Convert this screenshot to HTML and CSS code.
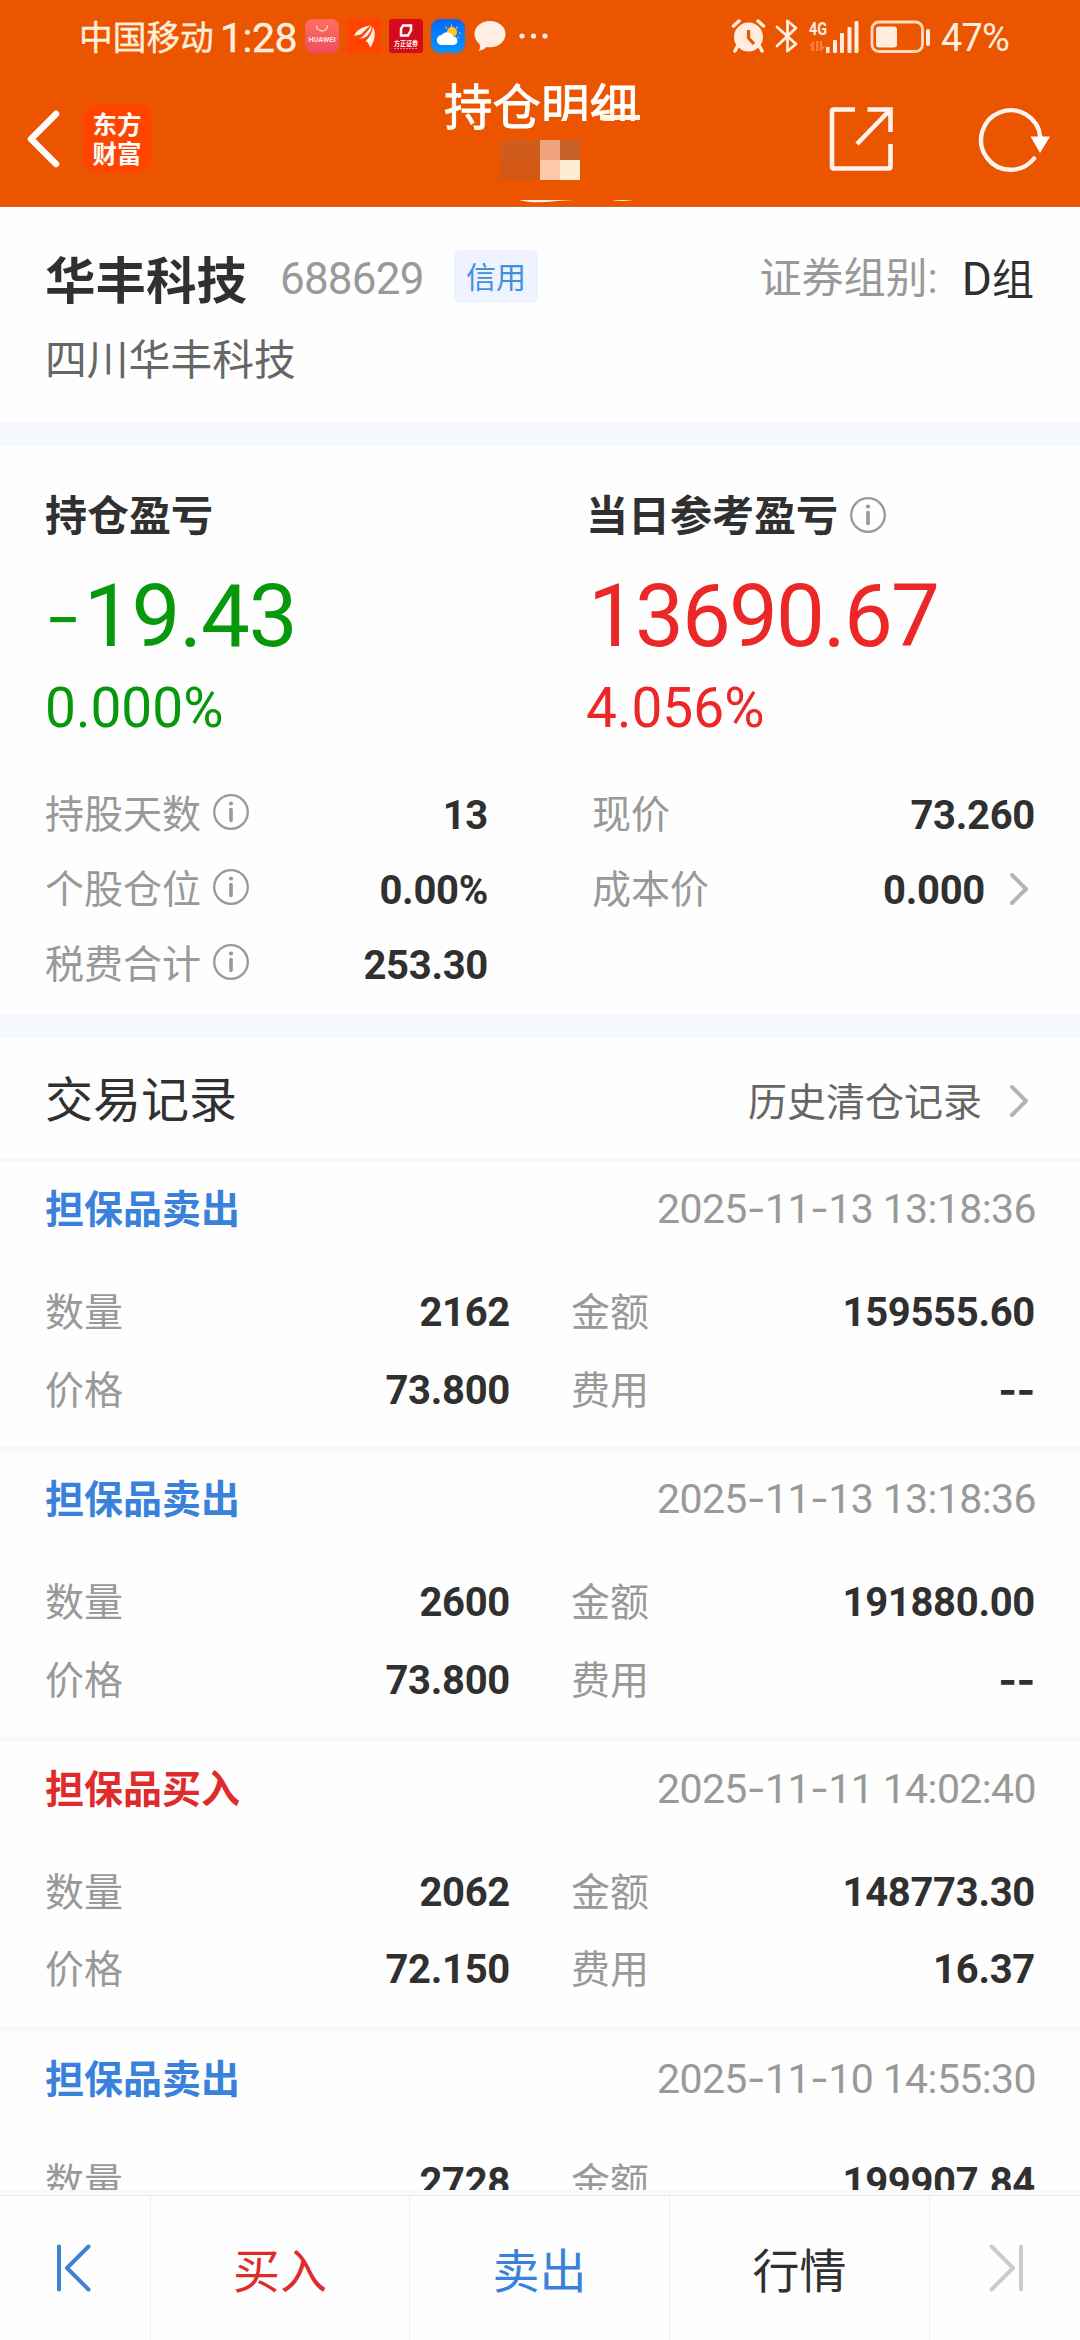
FILE: index.html
```html
<!DOCTYPE html>
<html lang="zh-CN">
<head>
<meta charset="utf-8">
<title>持仓明细</title>
<link rel="stylesheet" href="styles.css">
</head>
<body>
<svg class="defs" width="0" height="0">
  <symbol id="info" viewBox="0 0 36 36"><circle cx="18" cy="18" r="16.8" fill="none" stroke="#999" stroke-width="2.3"/><circle cx="18" cy="9.5" r="2.1" fill="#999"/><path d="M18 15.5V26.5" stroke="#999" stroke-width="3.6" stroke-linecap="round"/></symbol>
  <symbol id="chev" viewBox="0 0 20 34"><path d="M3 3L17 17L3 31" fill="none" stroke="#b5b3b6" stroke-width="4" stroke-linecap="round" stroke-linejoin="round"/></symbol>
</svg>
<div class="screen">
  <header class="top">
    <div class="status">
      <span class="carrier">中国移动</span><span class="clock">1:28</span>
      <div class="apps">
        <svg width="34" height="34" viewBox="0 0 34 34"><defs><linearGradient id="hw" x2="0" y2="1"><stop stop-color="#ff6f61"/><stop offset="1" stop-color="#ee4d62"/></linearGradient></defs><rect width="34" height="34" rx="8" fill="url(#hw)"/><path d="M11.5 6.500a5.500 5.500 0 0 0 11 0" fill="none" stroke="#ffd5cf" stroke-width="1.300"/><text x="3.500" y="22.500" class="hw-text" textLength="27" lengthAdjust="spacingAndGlyphs">HUAWEI</text></svg>
        <svg width="34" height="34" viewBox="0 0 34 34"><rect width="34" height="34" fill="#ff4300"/><g fill="#fff0e8"><path d="M7 17.500C8 12 16 7 23.500 6.500C20 9 17.500 12 15 14.500C12 17 9 15.500 7 17.500Z"/><path d="M12 20.500C17 16.500 21.500 12 24.300 6.500C25.300 9 23.500 13 20.500 16.500C18 19.500 15 18.500 12 20.500Z"/><path d="M18.500 22.500C23 18 25.500 13 25.800 8C29.500 13 27.500 22 23.500 28.500C21.500 26 21.500 22.500 18.500 22.500Z"/></g></svg>
        <svg width="34" height="34" viewBox="0 0 34 34"><rect width="34" height="34" rx="3" fill="#d50b1c"/><path d="M14 6.500H22V11.500L19 16.500H12V10Z" fill="none" stroke="#fff" stroke-width="2.500"/><text x="5" y="27" class="fz-text" textLength="24" lengthAdjust="spacingAndGlyphs">方正证券</text><path d="M5 29.500H29" stroke="#ee8d94" stroke-width="1" stroke-dasharray="2 1"/></svg>
        <svg width="34" height="34" viewBox="0 0 34 34"><defs><linearGradient id="wx" x2="0" y2="1"><stop stop-color="#0668f7"/><stop offset="1" stop-color="#0796ff"/></linearGradient></defs><rect width="34" height="34" rx="9" fill="url(#wx)"/><path d="M20.500 5.500v3M14.500 7.500l1.500 2M26.500 7.500l-1.500 2M28 14h2M26.500 18l1.500 1" stroke="#ffc62a" stroke-width="1.200"/><circle cx="21" cy="13" r="5" fill="#ffc62a"/><path d="M11 26a5 5 0 0 1-.5-10a6.500 6.500 0 0 1 11.500 1.500a4.300 4.300 0 0 1 1 8.500Z" fill="#fff"/></svg>
        <svg width="34" height="34" viewBox="0 0 34 34"><path d="M17 2C8.500 2 1.500 7.500 1.500 15C1.500 19 3.500 22.500 6.500 25C7.500 28 7 30.500 5.500 31.700C9 31.500 11.500 30 13.500 28C25 29.500 32.500 23 32.500 15C32.500 7.500 25.500 2 17 2Z" fill="#ffeee5"/></svg>
        <svg width="30" height="34" viewBox="0 0 30 34"><g fill="#ffeee5"><circle cx="7" cy="17" r="2.600"/><circle cx="18.500" cy="17" r="2.600"/><circle cx="30" cy="17" r="2.600"/></g></svg>
      </div>
      <div class="signals">
        <svg width="203" height="36" viewBox="0 0 203 36">
          <g fill="#ffeee0">
            <circle cx="17.500" cy="19" r="14.500"/><path d="M2.500 8L8 3M32.500 8L27 3" stroke="#ffeee0" stroke-width="3.500" stroke-linecap="round"/><path d="M6 29L4 33M29 29L31 33" stroke="#ffeee0" stroke-width="3.500" stroke-linecap="round"/>
            <path d="M17.500 12V20L23 26" fill="none" stroke="#ec5500" stroke-width="3.200"/>
            <path d="M46 9L65 26L56.500 33V3L65 10L46 28" fill="none" stroke="#ffeee0" stroke-width="2.800" stroke-linejoin="round" stroke-linecap="round"/>
            <text x="78" y="17" class="net" textLength="18" lengthAdjust="spacingAndGlyphs">4G</text>
            <path d="M78 27L83 23V33H80.500V28ZM85 23H87.500V33H85ZM89 23H91V28.500H94L89 34Z" fill="#ff7e3e"/>
            <rect x="95" y="29" width="3.500" height="6"/><rect x="102" y="22" width="4" height="13" rx="1"/><rect x="109" y="15" width="4" height="20" rx="1"/><rect x="116.500" y="9" width="4" height="26" rx="1"/><rect x="123.500" y="3" width="4" height="32" rx="1"/>
            <rect x="141" y="4" width="50.500" height="29.500" rx="7" fill="none" stroke="#ffd9bf" stroke-width="2.800"/><rect x="145" y="8.500" width="21" height="21" rx="3"/><rect x="195" y="11" width="4" height="17" rx="2"/>
          </g>
        </svg>
        <span class="batt">47%</span>
      </div>
    </div>
    <nav class="nav">
      <div class="nav-side">
        <svg class="back" width="34" height="60" viewBox="0 0 34 60"><path d="M30 5L5 30L30 55" fill="none" stroke="#fff" stroke-width="6.500" stroke-linecap="round" stroke-linejoin="round"/></svg>
        <div class="logo"><span>东方</span><span>财富</span></div>
      </div>
      <div class="nav-title"><h1>持仓明细</h1><i class="cover"></i><i class="bar"></i>
        <svg class="mosaic" width="80" height="40" shape-rendering="crispEdges"><path d="M0 0H40V20H0Z" fill="#d05b1a"/><path d="M0 20H40V40H0Z" fill="#d45815"/><path d="M40 0H60V20H40Z" fill="#eea17d"/><path d="M60 0H80V20H60Z" fill="#c5602b"/><path d="M40 20H60V40H40Z" fill="#fec9ab"/><path d="M60 20H80V40H60Z" fill="#ffecd4"/></svg>
        <svg class="sliver" width="116" height="4"><path d="M0 0H55L38 1Q14 4 0 0ZM93 0H114Q103 2 93 0Z" fill="#fff0dd"/></svg>
      </div>
      <div class="nav-side right">
        <svg width="66" height="66" viewBox="0 0 66 66"><path d="M27 3.500H5.500Q4 3.500 4 5V60.500Q4 62.500 6 62.500H60.500Q62.500 62.500 62.500 60.500V38M39.500 3.500H62.500V26M62 4L29 38" fill="none" stroke="#fff5ee" stroke-width="4.600"/></svg>
        <svg width="74" height="66" viewBox="0 0 74 66"><path d="M56 52.500A29.700 29.700 0 1 1 62.300 31" fill="none" stroke="#fff5ee" stroke-width="4.400" stroke-linecap="round"/><path d="M52.500 30.500H72L62 47Z" fill="#fff"/></svg>
      </div>
    </nav>
  </header>

  <section class="stock">
    <div class="stock-row"><h2>华丰科技</h2><span class="code">688629</span><span class="badge">信用</span><span class="group">证券组别:</span><span class="group-val"><span class="letter">D</span>组</span></div>
    <div class="full">四川华丰科技</div>
  </section>

  <section class="profit">
    <div class="pl">
      <div class="pl-col green"><h3>持仓盈亏</h3><div class="big"><span class="dash">-</span>19.43</div><div class="pct">0.000%</div></div>
      <div class="pl-col red"><h3>当日参考盈亏<svg class="info"><use href="#info"/></svg></h3><div class="big">13690.67</div><div class="pct">4.056%</div></div>
    </div>
    <div class="stats">
      <div class="col">
        <div class="row"><span>持股天数</span><svg class="info"><use href="#info"/></svg><b>13</b></div>
        <div class="row"><span>个股仓位</span><svg class="info"><use href="#info"/></svg><b>0.00%</b></div>
        <div class="row"><span>税费合计</span><svg class="info"><use href="#info"/></svg><b>253.30</b></div>
      </div>
      <div class="col">
        <div class="row"><span>现价</span><b>73.260</b></div>
        <div class="row"><span>成本价</span><b>0.000</b><svg class="chev"><use href="#chev"/></svg></div>
      </div>
    </div>
  </section>

  <section class="records">
    <div class="rec-head"><h2>交易记录</h2><span>历史清仓记录</span><svg class="chev"><use href="#chev"/></svg></div>
    <article class="trade">
      <div class="head"><h4 class="sell">担保品卖出</h4><time>2025<s>-</s>11<s>-</s>13 13:18:36</time></div>
      <div class="grid"><span>数量</span><b>2162</b><span>金额</span><b>159555.60</b><span>价格</span><b>73.800</b><span>费用</span><b class="none">--</b></div>
    </article>
    <article class="trade">
      <div class="head"><h4 class="sell">担保品卖出</h4><time>2025<s>-</s>11<s>-</s>13 13:18:36</time></div>
      <div class="grid"><span>数量</span><b>2600</b><span>金额</span><b>191880.00</b><span>价格</span><b>73.800</b><span>费用</span><b class="none">--</b></div>
    </article>
    <article class="trade">
      <div class="head"><h4 class="buy">担保品买入</h4><time>2025<s>-</s>11<s>-</s>11 14:02:40</time></div>
      <div class="grid"><span>数量</span><b>2062</b><span>金额</span><b>148773.30</b><span>价格</span><b>72.150</b><span>费用</span><b>16.37</b></div>
    </article>
    <article class="trade">
      <div class="head"><h4 class="sell">担保品卖出</h4><time>2025<s>-</s>11<s>-</s>10 14:55:30</time></div>
      <div class="grid"><span>数量</span><b>2728</b><span>金额</span><b>199907.84</b></div>
    </article>
  </section>

  <footer class="tabs">
    <div class="tab"><svg width="40" height="52" viewBox="0 0 40 52"><path d="M4 4.500V47.500M33.500 4.500L12 26L33.500 47.500" fill="none" stroke="#3f81d2" stroke-width="4" stroke-linecap="round" stroke-linejoin="round"/></svg></div>
    <div class="tab buy">买入</div>
    <div class="tab sell">卖出</div>
    <div class="tab">行情</div>
    <div class="tab"><svg width="40" height="52" viewBox="0 0 40 52"><path d="M36 4.500V47.500M6.500 4.500L28 26L6.500 47.500" fill="none" stroke="#ccc" stroke-width="4" stroke-linecap="round" stroke-linejoin="round"/></svg></div>
  </footer>
</div>
</body>
</html>
```
FILE: styles.css
```css
* { box-sizing: border-box; margin: 0; padding: 0; }
body { font-family: Roboto, "Noto Sans CJK SC", sans-serif; color: #303030; background: #fff; }
h1, h2, h3, h4 { font-weight: 400; }
svg { display: block; flex: none; }
.defs { position: absolute; }
.screen { width: 1080px; height: 2340px; overflow: hidden; display: flex; flex-direction: column; background: #fefefe; }

/* header */
.top { flex: none; height: 207px; background: #ec5500; border-bottom: 1px solid #c96a2c; color: #fff; }
.status { height: 72px; display: flex; align-items: center; padding: 0 70px 0 79px; color: #ffeedd; }
.carrier { font-size: 33.7px; width: 141px; line-height: 72px; padding-top: 5px; -webkit-text-stroke: 0.4px #ffeedd; }
.clock { font-size: 41px; width: 85px; line-height: 72px; padding-top: 4px; letter-spacing: -0.5px; -webkit-text-stroke: 0.4px #ffeedd; }
.apps { display: flex; gap: 8px; }
.apps svg { overflow: visible; }
.signals { margin-left: auto; display: flex; align-items: center; }
.batt { font-size: 38px; line-height: 72px; padding-top: 4px; margin-left: 7px; width: 69px; letter-spacing: -0.8px; }
.hw-text { font: 700 6.5px Roboto, sans-serif; fill: #ffe3de; }
.fz-text { font: 700 6.5px "Noto Sans CJK SC", sans-serif; fill: #fff; }
.net { font: 700 19px Roboto, sans-serif; }
.nav { height: 134px; display: grid; grid-template-columns: 1fr 200px 1fr; }
.nav-side { display: flex; align-items: center; padding-left: 26px; }
.nav-side.right { padding: 0 28px 0 0; gap: 84px; justify-content: flex-end; }
.logo { width: 68px; height: 68px; margin-left: 23px; border-radius: 13px; background: #ff4400; display: flex; flex-direction: column; align-items: center; justify-content: center; font-size: 24.5px; line-height: 29px; font-weight: 700; padding-top: 1px; }
.nav-title { position: relative; }
.nav-title h1 { font-size: 48.5px; line-height: 68px; width: 200px; margin-left: 4px; padding-top: 3px; white-space: nowrap; -webkit-text-stroke: 0.8px #fff; }
.cover { position: absolute; left: 100px; top: 49px; width: 110px; height: 14px; background: #ec5500; }
.bar { position: absolute; left: 160px; top: 43px; width: 40px; height: 5px; background: #fff6ea; }
.mosaic { position: absolute; left: 60px; top: 68px; }
.sliver { position: absolute; left: 79px; top: 128px; }

/* stock identity */
.stock { flex: none; height: 215px; padding: 36px 46px 0 45px; }
.stock-row { display: flex; align-items: flex-start; line-height: 72px; height: 76px; }
.stock-row h2 { font-size: 50.5px; font-weight: 700; line-height: 77px; width: 235px; }
.code { font-size: 44px; color: #999; letter-spacing: -0.8px; width: 174px; }
.badge { width: 84px; height: 53px; line-height: 56px; margin-top: 7px; border-radius: 7px; background: #eef3ff; color: #4090e2; font-size: 30px; text-align: center; }
.group { margin-left: auto; font-size: 42px; color: #999; }
.group-val { font-size: 42px; margin-left: 24px; }
.letter { font-size: 46px; }
.full { font-size: 41.8px; line-height: 60px; margin-top: 12px; color: #666; }

/* profit and stats */
.profit { flex: none; height: 616px; border-top: 24px solid #f6faff; border-bottom: 24px solid #f6faff; }
.pl { display: grid; grid-template-columns: 540px 540px; padding-top: 41px; height: 313px; border-bottom: 1px dashed #f8f8f8; }
.pl-col { padding-left: 45px; }
.pl-col h3 { font-size: 42px; line-height: 60px; font-weight: 700; color: #303030; display: flex; }
.pl-col h3 .info { margin: 10px 0 0 12px; }
.red h3, .red .pct { margin-left: 1px; }
.big { font-size: 87px; line-height: 100px; margin: 19px 0 0 3px; letter-spacing: -1.9px; }
.green .big { letter-spacing: -1.2px; }
.pct { font-size: 55px; line-height: 64px; margin-top: 10px; }
.green { color: #07980b; }
.red { color: #ec2727; }
.dash { font-family: Inter, sans-serif; font-size: 84px; font-weight: 300; margin: 0 3px 0 -4px; }
.stats { display: grid; grid-template-columns: 488px 547px; padding-top: 19px; }
.stats .col { padding-left: 45px; }
.stats .col:nth-child(2) { padding-left: 104px; }
.row { display: flex; align-items: center; height: 75px; line-height: 75px; font-size: 39px; color: #999; }
.row b { margin-left: auto; font-size: 40px; color: #303030; letter-spacing: -0.3px; }
.info { width: 36px; height: 36px; }
.row .info { margin: 0 0 8px 12px; }
.chev { width: 20px; height: 34px; }
.row .chev { margin: 0 6px 4px 24px; }

/* trade records */
.records { flex: none; height: 1152px; overflow: hidden; }
.rec-head { height: 124px; display: flex; align-items: center; padding: 6px 51px 0 45px; border-bottom: 4px solid #f6faff; }
.rec-head h2 { font-size: 48px; line-height: 100px; }
.rec-head span { margin-left: auto; font-size: 39px; line-height: 60px; padding-top: 4px; color: #666; }
.rec-head .chev { margin-left: 27px; }
.trade { height: 290px; border-bottom: 6px solid #f6faff; }
.head { height: 91px; padding: 4px 44px 0 45px; display: flex; justify-content: space-between; align-items: baseline; line-height: 85px; border-bottom: 1px dashed #f8f8f8; }
.head h4 { font-size: 39px; font-weight: 700; }
.head time { font-size: 41px; letter-spacing: -0.6px; color: #999; }
s { text-decoration: none; font-family: Inter, sans-serif; }
.sell { color: #3981db; }
.buy { color: #de2c2c; }
.grid { display: grid; grid-template-columns: 121px 344px 120px 1fr; grid-auto-rows: 77px; line-height: 77px; padding: 21px 45px 0 45px; font-size: 39px; color: #999; align-items: baseline; }
.grid b { font-size: 40px; color: #303030; text-align: right; letter-spacing: -0.3px; }
.grid span:nth-of-type(even) { padding-left: 61px; white-space: nowrap; }
.grid .none { font-family: Inter, sans-serif; }

/* bottom tabs */
.tabs { flex: 1; display: grid; grid-template-columns: 151px 259px 260px 260px 1fr; border-top: 5px solid #f6faff; }
.tab { border-top: 1px solid #e9e9ee; border-right: 1px solid #eee; display: flex; align-items: center; justify-content: center; font-size: 47px; padding-bottom: 1px; }
.tab:last-child { border-right: 0; }
```
